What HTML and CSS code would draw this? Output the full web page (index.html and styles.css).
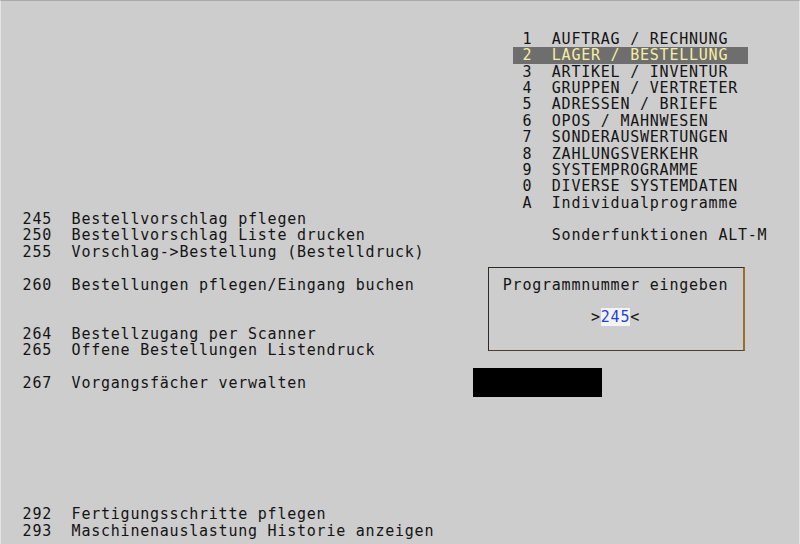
FILE: index.html
```html
<!DOCTYPE html>
<html lang="de">
<head>
<meta charset="utf-8">
<title>Lager / Bestellung</title>
<link rel="stylesheet" href="styles.css">
</head>
<body>
<div class="screen">
  <div class="row"></div>
  <div class="row"><span class="l"></span><span class="r">     1  AUFTRAG / RECHNUNG</span></div>
  <div class="row"><span class="l"></span><span class="r">    <span class="sel"> 2  LAGER / BESTELLUNG  </span></span></div>
  <div class="row"><span class="l"></span><span class="r">     3  ARTIKEL / INVENTUR</span></div>
  <div class="row"><span class="l"></span><span class="r">     4  GRUPPEN / VERTRETER</span></div>
  <div class="row"><span class="l"></span><span class="r">     5  ADRESSEN / BRIEFE</span></div>
  <div class="row"><span class="l"></span><span class="r">     6  OPOS / MAHNWESEN</span></div>
  <div class="row"><span class="l"></span><span class="r">     7  SONDERAUSWERTUNGEN</span></div>
  <div class="row"><span class="l"></span><span class="r">     8  ZAHLUNGSVERKEHR</span></div>
  <div class="row"><span class="l"></span><span class="r">     9  SYSTEMPROGRAMME</span></div>
  <div class="row"><span class="l"></span><span class="r">     0  DIVERSE SYSTEMDATEN</span></div>
  <div class="row"><span class="l"></span><span class="r">     A  Individualprogramme</span></div>
  <div class="row"><span class="l">  245  Bestellvorschlag pflegen</span></div>
  <div class="row"><span class="l">  250  Bestellvorschlag Liste drucken</span><span class="r">        Sonderfunktionen ALT-M</span></div>
  <div class="row"><span class="l">  255  Vorschlag-&gt;Bestellung (Bestelldruck)</span></div>
  <div class="row"></div>
  <div class="row"><span class="l">  260  Bestellungen pflegen/Eingang buchen</span><span class="r">   Programmnummer eingeben</span></div>
  <div class="row"></div>
  <div class="row"><span class="l"></span><span class="r">            &gt;<span class="input">245</span>&lt;</span></div>
  <div class="row"><span class="l">  264  Bestellzugang per Scanner</span></div>
  <div class="row"><span class="l">  265  Offene Bestellungen Listendruck</span></div>
  <div class="row"></div>
  <div class="row"><span class="l">  267  Vorgangsfächer verwalten</span></div>
  <div class="row"></div>
  <div class="row"></div>
  <div class="row"></div>
  <div class="row"></div>
  <div class="row"></div>
  <div class="row"></div>
  <div class="row"></div>
  <div class="row"><span class="l">  292  Fertigungsschritte pflegen</span></div>
  <div class="row"><span class="l">  293  Maschinenauslastung Historie anzeigen</span></div>

  <div class="dialog"></div>
  <div class="blackout"></div>
</div>
</body>
</html>
```

FILE: styles.css
```css
html, body {
  margin: 0;
  padding: 0;
  background: #cdcdcd;
}

.screen {
  position: relative;
  box-sizing: border-box;
  width: 800px;
  height: 544px;
  overflow: hidden;
  padding: 13.4px 0 0 2px;
  background: #cdcdcd;
  border-top: 1px solid #a9a9a9;
  border-left: 1px solid #e4e4e4;
  border-right: 1px solid #e4e4e4;
  color: #141414;
  font-family: "DejaVu Sans Mono", "Liberation Mono", monospace;
  font-size: 15px;
  letter-spacing: 0.769px;
}

.row {
  display: flex;
  height: 16.4px;
  line-height: 16.4px;
  white-space: pre;
}

.l {
  flex: none;
  width: 470.4px;
}

.r {
  flex: none;
}

.sel {
  display: inline-block;
  background: #6e6e6e;
  color: #f6eea0;
  height: 16.4px;
}

.input {
  background: #f4f4f4;
  color: #1f3fe0;
}

.dialog {
  position: absolute;
  left: 487px;
  top: 266px;
  width: 257px;
  height: 84px;
  box-sizing: border-box;
  border: 1px solid #2e2a24;
  border-right: 2px solid #9a6a2e;
  border-bottom: 1px solid #4a3f30;
}

.blackout {
  position: absolute;
  left: 472px;
  top: 367px;
  width: 129px;
  height: 29px;
  background: #000;
}
```
